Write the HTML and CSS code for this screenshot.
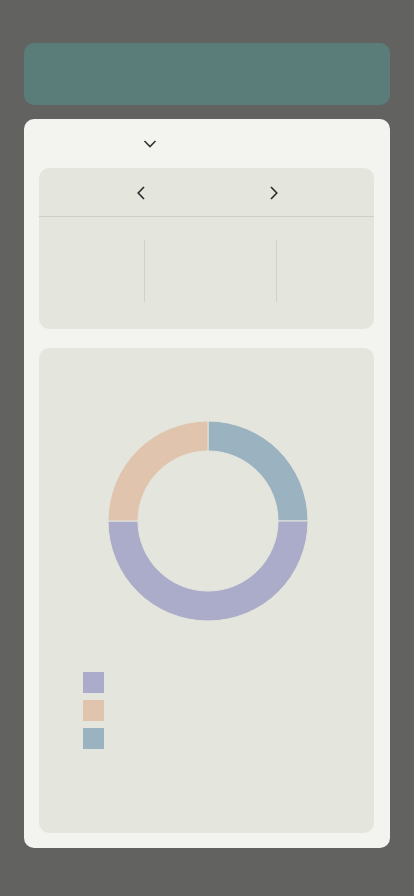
FILE: index.html
```html
<!DOCTYPE html>
<html lang="en">
<head>
<meta charset="utf-8">
<title>Overview</title>
<link rel="stylesheet" href="styles.css">
</head>
<body>
  <header class="banner"></header>
  <main class="card">
    <div class="card-head">
      <span class="head-label"></span>
      <svg class="chev-down" width="14" height="8" viewBox="0 0 14 8"><polyline points="1.5,1 7,6.5 12.5,1" fill="none" stroke="#333" stroke-width="1.6"/></svg>
    </div>
    <section class="panel period">
      <div class="period-nav">
        <svg class="arrow" width="8" height="14" viewBox="0 0 8 14"><polyline points="7,1 1.2,7 7,13" fill="none" stroke="#2a2a2a" stroke-width="1.6"/></svg>
        <span class="period-label"></span>
        <svg class="arrow" width="8" height="14" viewBox="0 0 8 14"><polyline points="1,1 6.8,7 1,13" fill="none" stroke="#2a2a2a" stroke-width="1.6"/></svg>
      </div>
      <div class="stats">
        <div class="stat"></div>
        <div class="vline"></div>
        <div class="stat"></div>
        <div class="vline"></div>
        <div class="stat"></div>
      </div>
    </section>
    <section class="panel chart">
      <svg class="donut" width="200" height="200" viewBox="0 0 200 200">
        <path d="M100,0 A100,100 0 0 1 200,100 L170,100 A70,70 0 0 0 100,30 Z" fill="#9bb2c1" stroke="#e4e5dd" stroke-width="1"/>
        <path d="M200,100 A100,100 0 0 1 0,100 L30,100 A70,70 0 0 0 170,100 Z" fill="#abacc9" stroke="#e4e5dd" stroke-width="1"/>
        <path d="M0,100 A100,100 0 0 1 100,0 L100,30 A70,70 0 0 0 30,100 Z" fill="#e0c4ad" stroke="#e4e5dd" stroke-width="1"/>
      </svg>
      <ul class="legend">
        <li class="swatch purple"></li>
        <li class="swatch peach"></li>
        <li class="swatch blue"></li>
      </ul>
    </section>
  </main>
</body>
</html>
```

FILE: styles.css
```css
* { box-sizing: border-box; }
html, body { margin: 0; padding: 0; }
body {
  background: #626260;
  font-family: "Liberation Sans", Arial, sans-serif;
  width: 414px;
  min-height: 896px;
}
.banner {
  display: block;
  margin: 43px 24px 0;
  height: 62px;
  border-radius: 10px;
  background: #5a7d7a;
}
.card {
  display: block;
  margin: 14px 24px 0;
  height: 729px;
  padding: 15px;
  border-radius: 10px;
  background: #f3f4ef;
}
.card-head {
  display: flex;
  align-items: center;
  height: 19px;
  margin-bottom: 15px;
}
.head-label { width: 104px; }
.chev-down { display: block; }
.panel {
  width: 335px;
  background: #e4e5dd;
  border-radius: 10px;
}
.period { height: 161px; }
.period-nav {
  display: flex;
  align-items: center;
  height: 49px;
  padding-left: 98px;
  padding-top: 1px;
  border-bottom: 1px solid #cfd0c8;
}
.arrow { display: block; }
.period-label { width: 125px; }
.stats {
  display: grid;
  grid-template-columns: 105px 1px 131px 1px 1fr;
  height: 62px;
  margin-top: 23px;
}
.vline { background: #d0d1c9; }
.chart {
  margin-top: 19px;
  height: 485px;
  padding-top: 73px;
  display: flex;
  flex-direction: column;
}
.donut {
  display: block;
  align-self: center;
  margin-left: 3px;
  overflow: visible;
}
.legend {
  list-style: none;
  margin: 51px 0 0;
  padding: 0 0 0 44px;
  display: flex;
  flex-direction: column;
  gap: 7px;
}
.swatch { width: 21px; height: 21px; }
.purple { background: #abacc9; }
.peach { background: #e0c4ad; }
.blue { background: #9bb2c1; }
```
